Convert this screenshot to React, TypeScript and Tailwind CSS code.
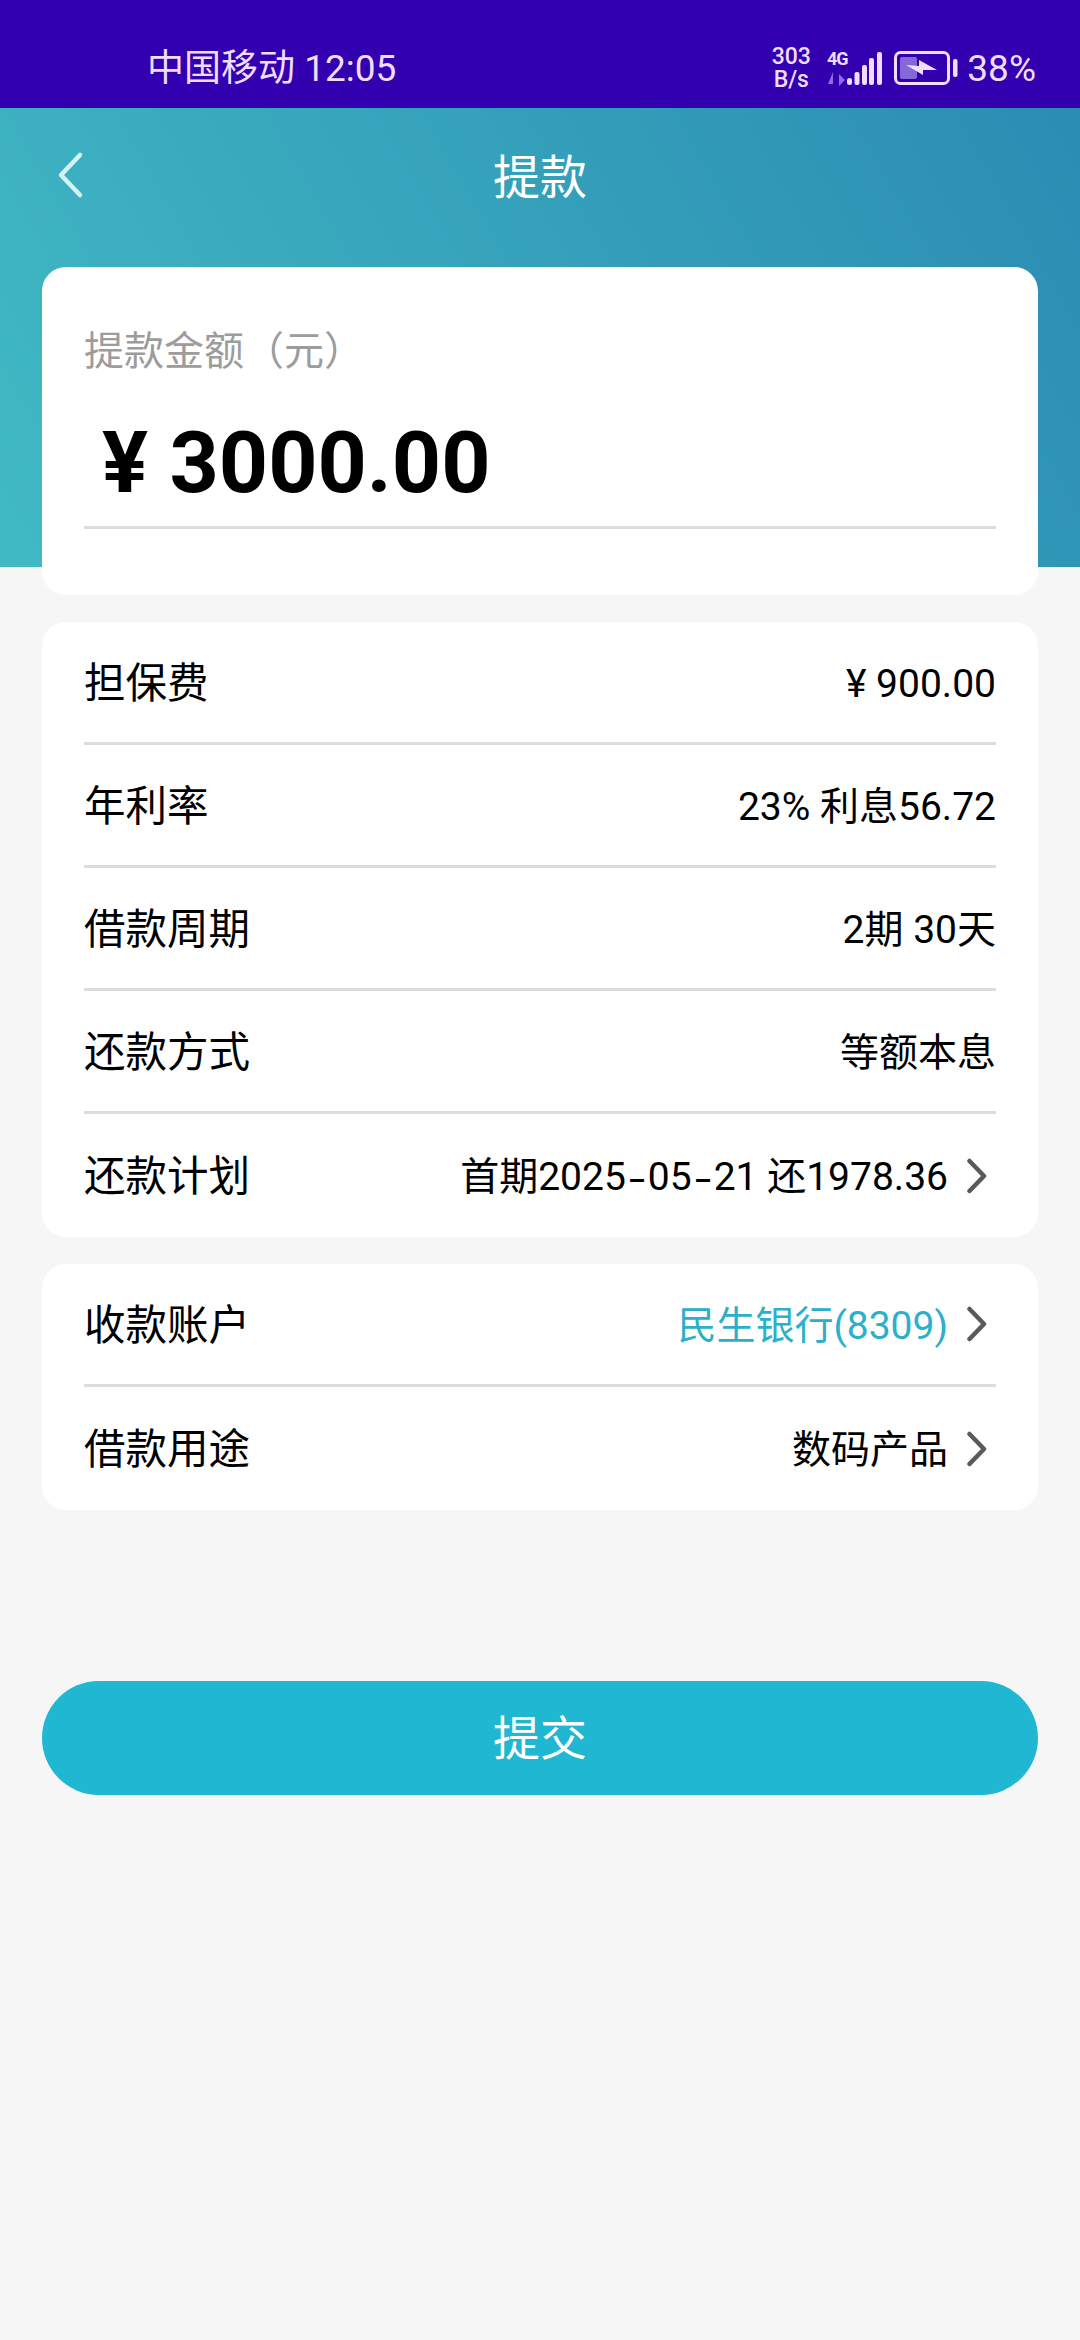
import type { ReactNode } from 'react';

const cjk = 'font-["Roboto","Noto_Sans_CJK_SC",sans-serif]';

function Chevron() {
  return (
    <svg width="22" height="36" viewBox="0 0 22 36" fill="none" className="ml-[18px] mr-[8px] shrink-0">
      <path d="M3.5 3 L18 18 L3.5 33" stroke="#5a5a5a" strokeWidth="4.5" strokeLinecap="round" strokeLinejoin="round" />
    </svg>
  );
}

// the dash in the date is wider and sits lower than Roboto's hyphen
function Dash() {
  return <span className="inline-block w-[22px] text-center scale-x-[1.5] translate-y-[2px]">-</span>;
}

function Row({ label, value, tint, arrow, last }: { label: string; value: ReactNode; tint?: boolean; arrow?: boolean; last?: boolean }) {
  return (
    <div className={`h-[123px] mx-[42px] flex items-center justify-between ${last ? '' : 'border-b-[3px] border-[#dcdcdc]'}`}>
      <span className="pt-[4px] text-[41.5px] text-black">{label}</span>
      <div className="flex items-center">
        <span className={`pt-[4px] text-[39px] ${tint ? 'text-[#2bb0cb]' : 'text-black'}`}>{value}</span>
        {arrow && <Chevron />}
      </div>
    </div>
  );
}

function StatusIcons() {
  return (
    <div className="flex items-center text-[#f0dcff]">
      <div className="w-[40px] text-center text-[23px] leading-[23px] font-medium">
        <div>303</div>
        <div>B/s</div>
      </div>
      <div className="ml-[16px] flex flex-col items-center w-[20px]">
        <span className="text-[18px] leading-[18px] font-bold tracking-[-1px]">4G</span>
        <svg width="20" height="14" viewBox="0 0 20 14" className="mt-[4px]">
          <path d="M6 0 L6 12 L1 12 Z M12 14 L12 2 L18 8 Z" fill="#8f6fe0" />
        </svg>
      </div>
      <svg width="35" height="34" viewBox="0 0 35 34" className="mt-[2px]">
        <rect x="0" y="26" width="5" height="7" rx="2.5" fill="#f0dcff" />
        <rect x="7.5" y="20" width="5" height="13" rx="2" fill="#f0dcff" />
        <rect x="15" y="13" width="5" height="20" rx="2" fill="#f0dcff" />
        <rect x="22" y="6" width="5" height="27" rx="2" fill="#f0dcff" />
        <rect x="30" y="0" width="5" height="33" rx="2" fill="#f0dcff" />
      </svg>
      <svg width="64" height="34" viewBox="0 0 64 34" className="ml-[12px]">
        <rect x="1.5" y="1.5" width="53" height="31" rx="5" fill="none" stroke="#f0dcff" strokeWidth="3" />
        <rect x="6" y="6" width="17" height="22" rx="2" fill="#8468d8" />
        <path d="M12 14 L25 15 L25 9 L43 19 L29 19 L29 24 Z" fill="#f0dcff" />
        <rect x="59" y="8" width="4.5" height="18" rx="2" fill="#f0dcff" />
      </svg>
      <span className="ml-[9px] text-[37px] leading-none">38%</span>
    </div>
  );
}

export default function App() {
  return (
    <div className={`min-h-[2340px] bg-[#f6f6f6] ${cjk}`}>
      <div className="h-[108px] bg-[#3300b0] flex items-center justify-between pl-[147px] pr-[44px] pt-[28px] text-[#f0dcff]">
        <span className="text-[37px] leading-none">中国移动 12:05</span>
        <StatusIcons />
      </div>

      <div className="relative">
        <div className="absolute inset-x-0 top-0 h-[459px] bg-[linear-gradient(60deg,#41bac4,#2b8cb3)]" />
        <div className="relative">
          <div className="h-[159px] pb-[18px] flex items-center justify-center relative">
            <svg width="28" height="48" viewBox="0 0 28 48" fill="none" className="absolute left-[57px] top-[43px]">
              <path d="M23 4 L4 24 L23 44" stroke="#d4f2f4" strokeWidth="4.5" strokeLinecap="round" strokeLinejoin="round" />
            </svg>
            <span className="text-[47px] text-white">提款</span>
          </div>

          <div className="mx-[42px] bg-white rounded-[24px] h-[328px] px-[42px] pt-[56px]">
            <div className="text-[40px] leading-[58px] text-[#9c9c9c]">提款金额（元）</div>
            <div className="border-b-[3px] border-[#dcdcdc] mt-[27px] h-[121px] pb-[8px] flex items-center pl-[18px]">
              <span className="text-[86px] leading-none font-bold text-black">¥ 3000.00</span>
            </div>
          </div>

          <div className="mx-[42px] mt-[27px] bg-white rounded-[24px]">
            <Row label="担保费" value="¥ 900.00" />
            <Row label="年利率" value="23% 利息56.72" />
            <Row label="借款周期" value="2期 30天" />
            <Row label="还款方式" value="等额本息" />
            <Row
              label="还款计划"
              value={<>首期2025<Dash />05<Dash />21 还1978.36</>}
              arrow
              last
            />
          </div>
          <div className="mx-[42px] mt-[27px] bg-white rounded-[24px]">
            <Row label="收款账户" value="民生银行(8309)" tint arrow />
            <Row label="借款用途" value="数码产品" arrow last />
          </div>

          <button className="block mx-[42px] mt-[171px] w-[996px] h-[114px] pt-[3px] rounded-full bg-[#20b7d3] text-white text-[47px]">
            提交
          </button>
        </div>
      </div>
    </div>
  );
}
